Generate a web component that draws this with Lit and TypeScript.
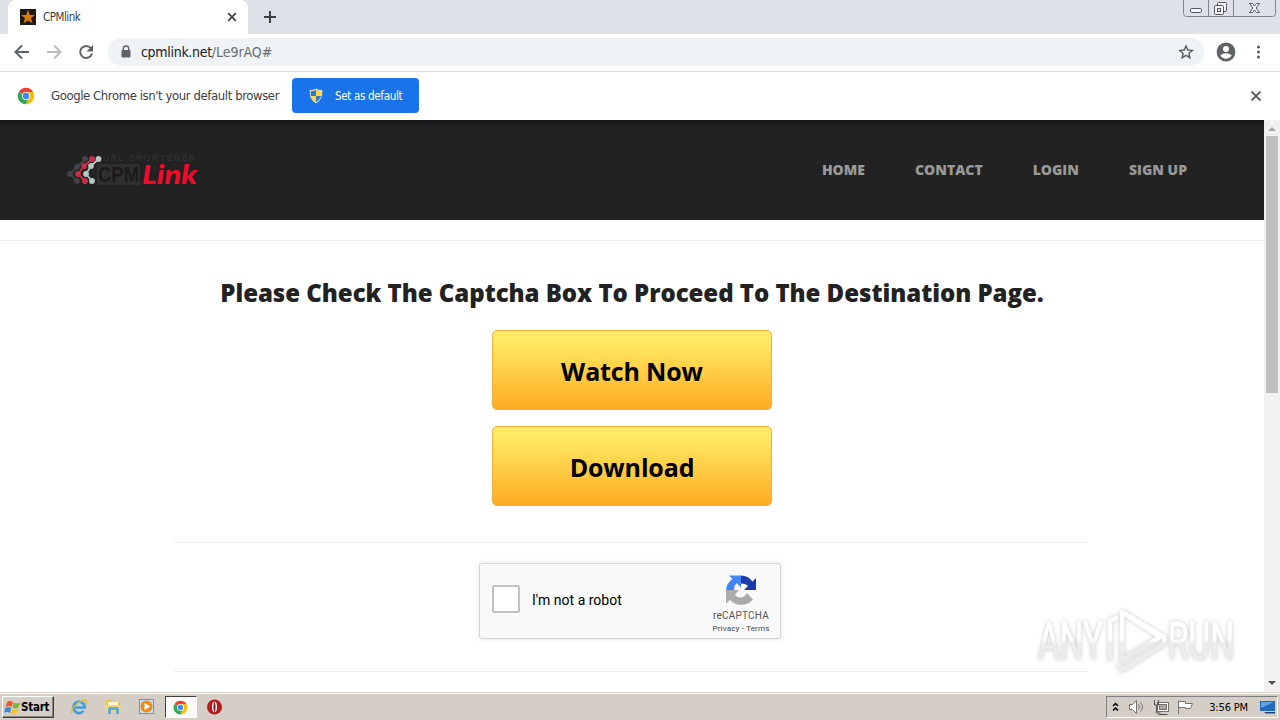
import { LitElement, css, html, svg } from "lit";
import { customElement } from "lit/decorators.js";

const chromeIcon = html`<svg width="18" height="18" viewBox="0 0 48 48">
  <circle cx="24" cy="24" r="22" fill="#fff" />
  <path d="M24 24 4.9 13A22 22 0 0 1 43 13H24z" fill="#ea4335" />
  <path d="M4.9 13A22 22 0 0 0 24 46l9.5-16.5L24 24z" fill="#34a853" />
  <path d="M43 13A22 22 0 0 1 24 46l9.5-16.5L24 13z" fill="#fbbc05" />
  <circle cx="24" cy="24" r="11" fill="#fff" />
  <circle cx="24" cy="24" r="8.5" fill="#4285f4" />
</svg>`;

@customElement("browser-chrome")
export class BrowserChrome extends LitElement {
  static styles = css`
    :host {
      display: block;
      font-family: "DejaVu Sans Condensed", "DejaVu Sans", sans-serif;
      color: #3c4043;
    }

    svg {
      display: block;
      flex: none;
    }

    .tabs {
      display: flex;
      height: 34px;
      background: #dee1e8;
      position: relative;
    }

    .tab {
      display: flex;
      align-items: center;
      box-sizing: border-box;
      width: 240px;
      height: 34px;
      margin-left: 8px;
      padding: 0 11px 0 12px;
      background: #fff;
      border-radius: 8px 8px 0 0;
    }

    .tab-title {
      flex: 1;
      margin-left: 7px;
      font-size: 11.5px;
      letter-spacing: -0.5px;
    }

    .plus {
      margin: 11px 0 0 16px;
    }

    .window-buttons {
      position: absolute;
      right: 4px;
      top: 0;
    }

    .toolbar {
      display: flex;
      align-items: center;
      box-sizing: border-box;
      height: 38px;
      padding: 0 14px 1px;
      border-bottom: 1px solid #dadce0;
      background: #fff;
    }

    .back,
    .forward {
      margin-right: 16px;
    }

    .address {
      display: flex;
      align-items: center;
      flex: 1;
      box-sizing: border-box;
      height: 28px;
      margin: 0 12px 0 14px;
      padding: 0 10px 0 12px;
      border-radius: 14px;
      background: #f0f3f6;
    }

    .url {
      flex: 1;
      margin-left: 9px;
      font-size: 14px;
      letter-spacing: -0.05px;
      color: #6a6e73;
    }

    .host {
      color: #202124;
      letter-spacing: -0.3px;
    }

    .menu {
      margin: 0 0 0 14px;
    }

    .infobar {
      display: flex;
      align-items: center;
      box-sizing: border-box;
      height: 48px;
      padding: 0 18px 1px 17px;
      background: #fff;
      font-size: 13px;
    }

    .message {
      width: 228px;
      margin: 0 13px 0 16px;
      letter-spacing: -0.41px;
      white-space: nowrap;
    }

    .default-button {
      display: flex;
      align-items: center;
      box-sizing: border-box;
      width: 127px;
      height: 35px;
      padding-left: 17px;
      border-radius: 4px;
      background: #1a73e8;
      color: #fff;
      font-size: 11.5px;
      letter-spacing: -0.32px;
      gap: 12px;
      white-space: nowrap;
    }

    .dismiss {
      margin-left: auto;
    }
  `;

  protected render(): unknown {
    return html`
      <div class="tabs">
        <div class="tab">
          <svg width="16" height="16" viewBox="0 0 16 16">
            <rect width="16" height="16" fill="#201a14" />
            <path
              d="M8 1l1.9 4.9 5.1.1-4 3.2 1.5 5.1L8 11.4l-4.5 2.9L5 9.2 1 6l5.1-.1z"
              fill="#d87a0c"
            />
          </svg>
          <span class="tab-title">CPMlink</span>
          <svg width="10" height="10" viewBox="0 0 10 10">
            <path d="M1.2 1.2l7.6 7.6M8.8 1.2L1.2 8.8" stroke="#3c4043" stroke-width="1.7" />
          </svg>
        </div>
        <svg class="plus" width="12" height="12" viewBox="0 0 12 12">
          <path d="M6 0v12M0 6h12" stroke="#3c4043" stroke-width="2" />
        </svg>
        <svg class="window-buttons" width="93" height="17" viewBox="0 0 93 17">
          <path
            d="M.5 0v13.5q0 3 3 3h86q3 0 3-3V0M25.5 0v16M50.5 0v16"
            fill="none"
            stroke="#7f848d"
          />
          <g fill="#f4f5f8" stroke="#53585f">
            <rect x="7.5" y="8.5" width="11" height="4" rx="1" />
            <rect x="34.5" y="2.5" width="9" height="9" rx="1" />
            <rect x="31.5" y="5.5" width="9" height="9" rx="1" />
            <rect x="34.5" y="8.5" width="3" height="3" />
            <path
              d="M66.5 3.5h3l2 2.5 2-2.5h3l-3.3 4.5 3.3 4.5h-3l-2-2.5-2 2.5h-3l3.3-4.5z"
            />
          </g>
        </svg>
      </div>
      <div class="toolbar">
        <svg class="back" width="16" height="16" viewBox="0 0 16 16">
          <path d="M15 8H2M8 1.5L1.5 8 8 14.5" fill="none" stroke="#5f6368" stroke-width="2" />
        </svg>
        <svg class="forward" width="16" height="16" viewBox="0 0 16 16">
          <path d="M1 8h13M8 1.5L14.5 8 8 14.5" fill="none" stroke="#babcbe" stroke-width="2" />
        </svg>
        <svg width="16" height="16" viewBox="0 0 16 16">
          <path d="M12.9 4.2A6 6 0 1 0 14 9.5" fill="none" stroke="#5f6368" stroke-width="2" />
          <path d="M15 1v6.5H8.500z" fill="#5f6368" />
        </svg>
        <div class="address">
          <svg width="12" height="14" viewBox="0 0 12 14">
            <path d="M3.3 6V3.7a2.7 2.7 0 0 1 5.4 0V6" fill="none" stroke="#5f6368" stroke-width="1.4" />
            <rect x="1.5" y="5" width="9" height="7.5" rx="1" fill="#5f6368" />
          </svg>
          <span class="url"><span class="host">cpmlink.net</span>/Le9rAQ#</span>
          <svg width="16" height="16" viewBox="0 0 16 16">
            <path
              d="M8 2l1.8 4.1 4.4.4-3.3 2.9 1 4.3L8 11.4l-3.9 2.3 1-4.3-3.3-2.9 4.4-.4z"
              fill="none"
              stroke="#5f6368"
              stroke-width="1.5"
            />
          </svg>
        </div>
        <svg width="20" height="20" viewBox="0 0 20 20">
          <circle cx="10" cy="10" r="9.4" fill="#5f6368" />
          <circle cx="10" cy="7" r="3" fill="#fff" />
          <path d="M4.2 13.6q2.3-2.3 5.8-2.3t5.8 2.3Q13.6 16.7 10 16.7t-5.8-3.100z" fill="#fff" />
        </svg>
        <svg class="menu" width="16" height="16" viewBox="0 0 16 16">
          <g fill="#5f6368">
            <circle cx="8.5" cy="3" r="1.6" />
            <circle cx="8.5" cy="8" r="1.6" />
            <circle cx="8.5" cy="13" r="1.6" />
          </g>
        </svg>
      </div>
      <div class="infobar">
        ${chromeIcon}
        <span class="message">Google Chrome isn't your default browser</span>
        <div class="default-button">
          <svg width="14" height="16" viewBox="0 0 14 16">
            <path d="M7 .5q3 1.7 6.3 1.5Q14 12 7 15.5 0 12 .7 2 4 2.2 7 .5z" fill="#d9dcd4" />
            <path d="M7 2v6H1.9Q1.6 5.5 1.9 3.2 5 3.2 7 2zM7 8h5Q11 12 7 14z" fill="#2c7cc9" />
            <path d="M7 2v6h5.1q.3-2.500 0-4.8Q9 3.2 7 2zM7 8H2q1 4 5 6z" fill="#ffd83a" />
          </svg>
          Set as default
        </div>
        <svg class="dismiss" width="12" height="12" viewBox="0 0 12 12">
          <path d="M1.5 1.5l9 9M10.5 1.5l-9 9" stroke="#5f6368" stroke-width="1.9" />
        </svg>
      </div>
    `;
  }
}

@customElement("cpm-page")
export class CpmPage extends LitElement {
  static styles = css`
    :host {
      display: flex;
      font-family: "Open Sans", sans-serif;
      background: #fff;
      overflow: hidden;
    }

    main {
      flex: 1;
    }

    header {
      display: flex;
      align-items: center;
      box-sizing: border-box;
      height: 100px;
      padding: 0 77px 0 65px;
      background: linear-gradient(#161616, #222 6px);
    }

    .logo-top {
      font: 700 8.5px "Liberation Sans", sans-serif;
    }

    .logo-cpm {
      font: 700 22px "Liberation Sans", sans-serif;
    }

    .logo-link {
      font: italic 900 27px Lato, sans-serif;
    }

    nav {
      display: flex;
      gap: 50px;
      margin: -2px 0 0 auto;
      font-size: 14px;
      font-weight: 800;
      color: #999;
      white-space: nowrap;
    }

    .content {
      display: flex;
      flex-direction: column;
      align-items: center;
      margin-top: 20px;
      border-top: 1px solid #eee;
    }

    h1 {
      margin: 35px 0 20px;
      font-size: 24px;
      font-weight: 800;
      line-height: 34px;
      letter-spacing: -0.03px;
      color: #222;
      white-space: nowrap;
    }

    .action {
      box-sizing: border-box;
      width: 280px;
      height: 80px;
      margin-bottom: 16px;
      border: 1px solid #eeb044;
      border-radius: 5px;
      background: linear-gradient(#ffec64 10%, #ffab23);
      color: #000;
      font-size: 25px;
      font-weight: 700;
      line-height: 80px;
      letter-spacing: -0.15px;
      text-align: center;
    }

    .rule {
      width: 914px;
      height: 1px;
      margin: 20px 2px 20px 0;
      background: #eee;
    }

    .captcha {
      display: flex;
      align-items: center;
      box-sizing: border-box;
      width: 302px;
      height: 76px;
      margin: 0 4px 12px 0;
      padding: 0 10px 0 12px;
      border: 1px solid #d3d3d3;
      border-radius: 3px;
      background: #f9f9f9;
      box-shadow: 0 0 4px 1px rgba(0, 0, 0, 0.08);
      font-family: Roboto, sans-serif;
    }

    .checkbox {
      box-sizing: border-box;
      width: 28px;
      height: 28px;
      margin-top: -4px;
      border: 2px solid #c1c1c1;
      border-radius: 2px;
      background: #fff;
    }

    .robot {
      flex: 1;
      margin: -2px 0 0 12px;
      font-size: 14px;
      color: #000;
    }

    .brand {
      display: flex;
      flex-direction: column;
      align-items: center;
      width: 58px;
      margin-top: 6px;
      color: #555;
      white-space: nowrap;
    }

    .brand-name {
      margin-top: 3px;
      font-size: 10px;
      line-height: 13px;
      letter-spacing: 0.2px;
    }

    .terms {
      margin-top: 1px;
      font-size: 8px;
      line-height: 12px;
      letter-spacing: 0.18px;
      color: #444;
    }

    .scrollbar {
      display: flex;
      flex-direction: column;
      align-items: center;
      width: 16px;
      background: #f1f1f1;
    }

    .thumb {
      width: 12px;
      height: 257px;
      background: #c1c1c1;
    }

    .down {
      margin-top: auto;
    }
  `;

  renderDots() {
    // chains of drops: outer grey, middle red, inner light
    const chains: [string, [number, number][]][] = [
      ["#3e4447", [[20, 11], [12, 19], [5, 26], [12, 33]]],
      ["#c52f43", [[27, 11], [19, 18], [13, 26], [20, 33]]],
      ["#b4c6c5", [[33.5, 11], [26, 18], [21, 26], [27, 33]]],
    ];
    return chains.map(
      ([color, dots]) => svg`
        <polyline points=${dots.join(" ")} fill="none" stroke=${color} stroke-width="1.8" />
        ${dots.map(([x, y]) => svg`<circle cx=${x} cy=${y} r="2.9" fill=${color} />`)}
      `
    );
  }

  protected render(): unknown {
    return html`
      <main>
        <header>
          <svg width="140" height="44" viewBox="0 0 140 44">
            ${this.renderDots()}
            <text class="logo-top" x="38" y="13" textLength="92" fill="#303030">URL SHORTENER</text>
            <rect x="32" y="16" width="43" height="21" rx="1" fill="#2f2f2f" />
            <text class="logo-cpm" x="33" y="34" textLength="41" lengthAdjust="spacingAndGlyphs" fill="#1b1b1b">CPM</text>
            <text class="logo-link" x="77" y="36" textLength="55" lengthAdjust="spacingAndGlyphs" fill="#f00a2c">Link</text>
          </svg>
          <nav>
            <span>HOME</span><span>CONTACT</span><span>LOGIN</span><span>SIGN UP</span>
          </nav>
        </header>
        <section class="content">
          <h1>Please Check The Captcha Box To Proceed To The Destination Page.</h1>
          <div class="action">Watch Now</div>
          <div class="action">Download</div>
          <div class="rule"></div>
          <div class="captcha">
            <div class="checkbox"></div>
            <span class="robot">I'm not a robot</span>
            <div class="brand">
              <svg width="32" height="32" viewBox="0 0 64 64">
                <path d="M62 32V8l-7 7A30 30 0 0 0 32 3v16q10 0 14 5l-8 8z" fill="#1c3aa9" />
                <path d="M32 3H8l7 7A30 30 0 0 0 2 32h16q0-9 5-14l9 9z" fill="#4285f4" />
                <path d="M2 32v27l8-7a31 31 0 0 0 46-1L44 38q-5 9-13 9-8 0-11-6l8-9z" fill="#ababab" />
              </svg>
              <span class="brand-name">reCAPTCHA</span>
              <span class="terms">Privacy - Terms</span>
            </div>
          </div>
          <div class="rule"></div>
        </section>
      </main>
      <div class="scrollbar">
        <svg width="16" height="16"><path d="M4 11h8L8 7z" fill="#a3a3a3" /></svg>
        <div class="thumb"></div>
        <svg class="down" width="16" height="16"><path d="M4 5h8l-4 4z" fill="#505050" /></svg>
      </div>
    `;
  }
}

@customElement("any-run-mark")
export class AnyRunMark extends LitElement {
  static styles = css`
    :host {
      position: absolute;
      right: 40px;
      bottom: 42px;
    }

    svg {
      display: block;
      overflow: visible;
      filter: drop-shadow(0 0 2px rgba(0, 0, 0, 0.22));
    }

    text {
      font: 400 51px Roboto, sans-serif;
    }
  `;

  protected render(): unknown {
    return html`
      <svg width="210" height="74" viewBox="0 0 210 74">
        <defs>
          <linearGradient id="fade" gradientUnits="userSpaceOnUse" x1="0" y1="0" x2="0" y2="74">
            <stop offset="0.48" stop-color="#fff" />
            <stop offset="0.54" stop-color="#ececec" />
          </linearGradient>
        </defs>
        <g fill="url(#fade)" stroke="url(#fade)" stroke-width="0.8">
          <text x="8" y="55" textLength="65" lengthAdjust="spacingAndGlyphs">ANY</text>
          <text x="138" y="55" textLength="66" lengthAdjust="spacingAndGlyphs">RUN</text>
        </g>
        <g fill="none" stroke="url(#fade)" stroke-width="4.5" stroke-linejoin="round">
          <path d="M92 8v48l38-23z" />
          <path d="M88 13l-8 4v40M88 60l4 6 42-26v-7L92 8" />
        </g>
      </svg>
    `;
  }
}

@customElement("task-bar")
export class TaskBar extends LitElement {
  static styles = css`
    :host {
      display: flex;
      align-items: center;
      box-sizing: border-box;
      height: 28px;
      padding: 1px 2px 0;
      border-top: 1px solid #d4d0c8;
      background: #d5cec6;
      box-shadow: inset 0 1px #fff;
      font-family: "DejaVu Sans Condensed", "DejaVu Sans", sans-serif;
      font-size: 11px;
      color: #000;
    }

    svg {
      display: block;
      flex: none;
    }

    .start {
      display: flex;
      align-items: center;
      box-sizing: border-box;
      width: 52px;
      height: 22px;
      padding-left: 1px;
      border: 1px solid;
      border-color: #fff #404040 #404040 #fff;
      box-shadow: inset -1px -1px #86827c;
      font-size: 11.5px;
      font-weight: 700;
      letter-spacing: -0.25px;
    }

    .quick {
      display: flex;
      align-items: center;
      gap: 16px;
      margin-left: 16px;
    }

    .active {
      display: flex;
      align-items: center;
      justify-content: center;
      box-sizing: border-box;
      width: 32px;
      height: 22px;
      margin: 0 -7px;
      border: 1px solid;
      border-color: #404040 #fff #fff #404040;
      background: #fbfaf9;
    }

    .active svg {
      width: 15px;
      height: 15px;
      margin-right: 1px;
    }

    .tray {
      display: flex;
      align-items: center;
      box-sizing: border-box;
      width: 172px;
      height: 22px;
      margin-left: auto;
      padding: 0 1px 0 5px;
      border: 1px solid;
      border-color: #808080 #fff #fff #808080;
    }

    .clock {
      margin: 0 11px 0 auto;
      letter-spacing: -0.15px;
    }
  `;

  protected render(): unknown {
    return html`
      <div class="start">
        <svg width="17" height="17" viewBox="0 0 17 17">
          <path d="M3 3q3-2 6 0L7.5 8q-3-2-6 0z" fill="#ed5b22" />
          <path d="M10 3.5q3 2 6 0L14.5 8.500q-3 2-6 0z" fill="#79b63c" />
          <path d="M1.3 9q3-2 6 0L6 14q-3-2-6 0z" fill="#3d88d8" />
          <path d="M8.2 9.5q3 2 6 0L12.7 14.500q-3 2-6 0z" fill="#fac42c" />
        </svg>
        Start
      </div>
      <div class="quick">
        <svg width="18" height="18" viewBox="0 0 18 18">
          <path d="M4.5 9.5h10.3A5.7 5.7 0 1 0 13.5 13" fill="none" stroke="#3b9fe0" stroke-width="2.7" />
          <path d="M2.2 15.5C-.5 13 7 3 15 2q3 0 1 4" fill="none" stroke="#e2b93c" stroke-width="1.3" />
        </svg>
        <svg width="18" height="18" viewBox="0 0 18 18">
          <path d="M2 2h5l1 2h8v10H2z" fill="#e3c25c" />
          <path d="M4 4h10v6H4z" fill="#fff6c9" />
          <path d="M1 7h16v7H1z" fill="#f0d67d" />
          <path d="M4 16v-5q0-2 2-2h7q2 0 2 2v5h-3v-4H7v4z" fill="#5eacdc" />
        </svg>
        <svg width="18" height="18" viewBox="0 0 18 18">
          <rect x="1.5" y="1.5" width="14" height="14" fill="#c8e2f5" stroke="#579bce" />
          <circle cx="8.5" cy="8.5" r="6" fill="#f28b13" />
          <path d="M6.5 5v7L12.5 8.500z" fill="#fff" />
        </svg>
        <div class="active">${chromeIcon}</div>
        <svg width="18" height="18" viewBox="0 0 18 18">
          <circle cx="8.5" cy="9" r="7.5" fill="#b51a20" />
          <ellipse cx="8.5" cy="9" rx="2.5" ry="5.2" fill="#fff" />
          <ellipse cx="8.5" cy="9" rx="1" ry="4.8" fill="#8c1116" />
        </svg>
      </div>
      <div class="tray">
        <svg width="8" height="12" viewBox="0 0 8 12">
          <path d="M1 5l2.5-2.500L6 5M1 9.5L3.5 7 6 9.5" fill="none" stroke="#000" stroke-width="1.5" />
        </svg>
        <svg width="76" height="18" viewBox="0 0 76 18">
          <g fill="#fff" stroke="#77736e">
            <path d="M9.5 6.5h3l4-4v13l-4-4h-3z" />
            <path d="M18.5 6.5q2 2.500 0 5M20.5 4.5q4 4.500 0 9" fill="none" />
            <rect x="37.5" y="4.5" width="11" height="9" />
            <rect x="39.5" y="6.5" width="7" height="5" fill="#aaa6a0" />
            <path d="M38.5 16.5h9M34.5 2v5h4V2M36.5 7v8h4" fill="none" stroke="#55524e" />
            <path d="M58.5 16V2.5M58.5 3.5h7v2h7l-2 5h-5v-1h-7z" />
          </g>
        </svg>
        <span class="clock">3:56 PM</span>
        <svg width="17" height="15" viewBox="0 0 17 15">
          <path d="M1 1h15v10H1z" fill="#2369ba" />
          <path d="M2 2h13L2 8z" fill="#5da1e2" />
          <path d="M5 12h11v1.5H7z" fill="#174778" />
        </svg>
      </div>
    `;
  }
}

@customElement("app-root")
export class AppRoot extends LitElement {
  static styles = css`
    :host {
      display: flex;
      flex-direction: column;
      position: relative;
      height: 720px;
      background: #fff;
    }

    cpm-page {
      flex: 1;
      min-height: 0;
    }
  `;

  protected render(): unknown {
    return html`
      <browser-chrome></browser-chrome>
      <cpm-page></cpm-page>
      <task-bar></task-bar>
      <any-run-mark></any-run-mark>
    `;
  }
}
